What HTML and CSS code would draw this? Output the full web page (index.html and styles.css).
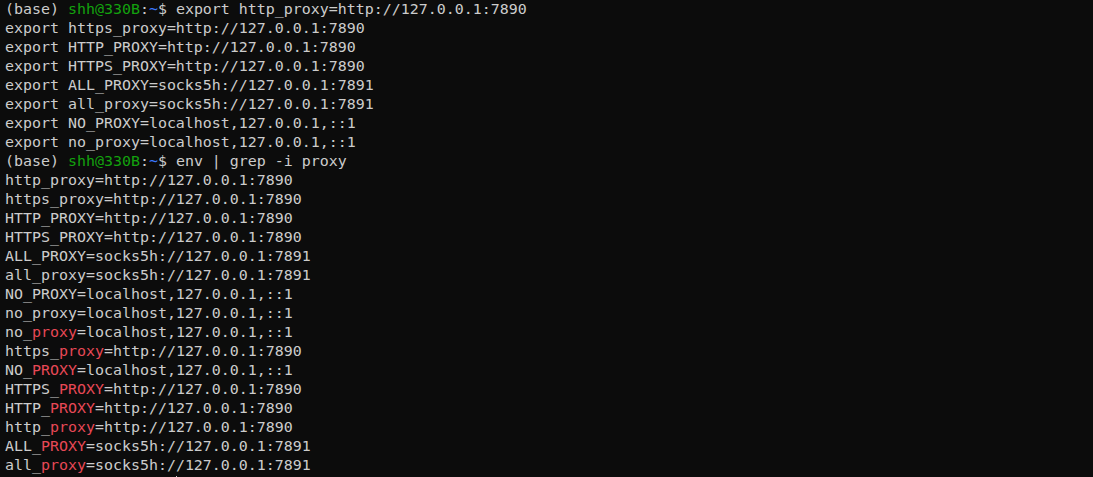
FILE: index.html
```html
<!DOCTYPE html>
<html>
<head>
<meta charset="utf-8">
<link rel="stylesheet" href="styles.css">
</head>
<body>
<div class="term">
<div class="ln">(base) <span class="g">shh@330B</span>:<span class="b">~</span>$ export http_proxy=http://127.0.0.1:7890</div>
<div class="ln">export https_proxy=http://127.0.0.1:7890</div>
<div class="ln">export HTTP_PROXY=http://127.0.0.1:7890</div>
<div class="ln">export HTTPS_PROXY=http://127.0.0.1:7890</div>
<div class="ln">export ALL_PROXY=socks5h://127.0.0.1:7891</div>
<div class="ln">export all_proxy=socks5h://127.0.0.1:7891</div>
<div class="ln">export NO_PROXY=localhost,127.0.0.1,::1</div>
<div class="ln">export no_proxy=localhost,127.0.0.1,::1</div>
<div class="ln">(base) <span class="g">shh@330B</span>:<span class="b">~</span>$ env | grep -i proxy</div>
<div class="ln">http_proxy=http://127.0.0.1:7890</div>
<div class="ln">https_proxy=http://127.0.0.1:7890</div>
<div class="ln">HTTP_PROXY=http://127.0.0.1:7890</div>
<div class="ln">HTTPS_PROXY=http://127.0.0.1:7890</div>
<div class="ln">ALL_PROXY=socks5h://127.0.0.1:7891</div>
<div class="ln">all_proxy=socks5h://127.0.0.1:7891</div>
<div class="ln">NO_PROXY=localhost,127.0.0.1,::1</div>
<div class="ln">no_proxy=localhost,127.0.0.1,::1</div>
<div class="ln">no_<span class="r">proxy</span>=localhost,127.0.0.1,::1</div>
<div class="ln">https_<span class="r">proxy</span>=http://127.0.0.1:7890</div>
<div class="ln">NO_<span class="r">PROXY</span>=localhost,127.0.0.1,::1</div>
<div class="ln">HTTPS_<span class="r">PROXY</span>=http://127.0.0.1:7890</div>
<div class="ln">HTTP_<span class="r">PROXY</span>=http://127.0.0.1:7890</div>
<div class="ln">http_<span class="r">proxy</span>=http://127.0.0.1:7890</div>
<div class="ln">ALL_<span class="r">PROXY</span>=socks5h://127.0.0.1:7891</div>
<div class="ln">all_<span class="r">proxy</span>=socks5h://127.0.0.1:7891</div>
<div class="ln">(base) <span class="g">shh@330B</span>:<span class="b">~</span>$ <span class="cursor"></span></div>
</div>
</body>
</html>
```
FILE: styles.css
```css
html, body {
  margin: 0;
  padding: 0;
  background: #0c0c0c;
  height: 100%;
  overflow: hidden;
}
.term {
  padding: 0 0 0 5px;
  font-family: "DejaVu Sans Mono", "Liberation Mono", monospace;
  font-size: 14.95px;
  line-height: 19px;
  color: #cccccc;
}
.ln {
  white-space: pre;
  height: 19px;
}
.g { color: #13a10e; }
.b { color: #3b78ff; }
.r { color: #e74856; }
.cursor {
  display: inline-block;
  width: 1px;
  height: 17px;
  background: #cccccc;
  vertical-align: -4px;
}
```
